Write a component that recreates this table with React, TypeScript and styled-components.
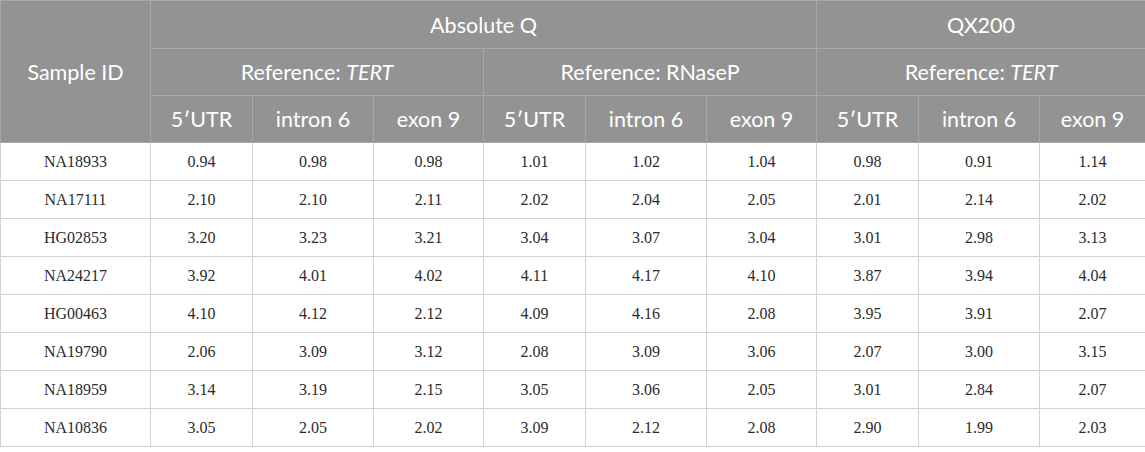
import React from "react";
import styled, { createGlobalStyle } from "styled-components";

const Global = createGlobalStyle`
  html, body { margin: 0; padding: 0; background: #ffffff; }
`;

const Table = styled.table`
  width: 1145px;
  table-layout: fixed;
  border-collapse: collapse;
  border: 1px solid #cfcfcf;
`;

const HeadCell = styled.th<{ $h: number }>`
  background: #939393;
  color: #ffffff;
  font-family: Lato, "Open Sans", sans-serif;
  font-weight: 400;
  font-size: 21.5px;
  height: ${(p) => p.$h}px;
  padding: 0;
  text-align: center;
  vertical-align: middle;
  border: 1px solid #a9a9a9;
  box-sizing: border-box;
`;

const Cell = styled.td`
  font-family: "Liberation Serif", "Times New Roman", serif;
  font-size: 16px;
  color: #2b2b2b;
  height: 38px;
  padding: 0;
  text-align: center;
  vertical-align: middle;
  border: 1px solid #d2d2d2;
  box-sizing: border-box;
`;

const widths = [150, 102, 121, 110, 102, 121, 110, 102, 121, 106];

const rows: string[][] = [
  ["NA18933", "0.94", "0.98", "0.98", "1.01", "1.02", "1.04", "0.98", "0.91", "1.14"],
  ["NA17111", "2.10", "2.10", "2.11", "2.02", "2.04", "2.05", "2.01", "2.14", "2.02"],
  ["HG02853", "3.20", "3.23", "3.21", "3.04", "3.07", "3.04", "3.01", "2.98", "3.13"],
  ["NA24217", "3.92", "4.01", "4.02", "4.11", "4.17", "4.10", "3.87", "3.94", "4.04"],
  ["HG00463", "4.10", "4.12", "2.12", "4.09", "4.16", "2.08", "3.95", "3.91", "2.07"],
  ["NA19790", "2.06", "3.09", "3.12", "2.08", "3.09", "3.06", "2.07", "3.00", "3.15"],
  ["NA18959", "3.14", "3.19", "2.15", "3.05", "3.06", "2.05", "3.01", "2.84", "2.07"],
  ["NA10836", "3.05", "2.05", "2.02", "3.09", "2.12", "2.08", "2.90", "1.99", "2.03"],
];

const SubHeads = () => (
  <>
    <HeadCell $h={47}>5′UTR</HeadCell>
    <HeadCell $h={47}>intron 6</HeadCell>
    <HeadCell $h={47}>exon 9</HeadCell>
  </>
);

export default function App() {
  return (
    <>
      <Global />
      <Table>
        <colgroup>
          {widths.map((w, i) => (
            <col key={i} style={{ width: w }} />
          ))}
        </colgroup>
        <thead>
          <tr>
            <HeadCell $h={48} rowSpan={3}>
              Sample ID
            </HeadCell>
            <HeadCell $h={48} colSpan={6}>
              Absolute Q
            </HeadCell>
            <HeadCell $h={48} colSpan={3}>
              QX200
            </HeadCell>
          </tr>
          <tr>
            <HeadCell $h={47} colSpan={3}>
              Reference: <i>TERT</i>
            </HeadCell>
            <HeadCell $h={47} colSpan={3}>
              Reference: RNaseP
            </HeadCell>
            <HeadCell $h={47} colSpan={3}>
              Reference: <i>TERT</i>
            </HeadCell>
          </tr>
          <tr>
            <SubHeads />
            <SubHeads />
            <SubHeads />
          </tr>
        </thead>
        <tbody>
          {rows.map((r) => (
            <tr key={r[0]}>
              {r.map((v, i) => (
                <Cell key={i}>{v}</Cell>
              ))}
            </tr>
          ))}
        </tbody>
      </Table>
    </>
  );
}
